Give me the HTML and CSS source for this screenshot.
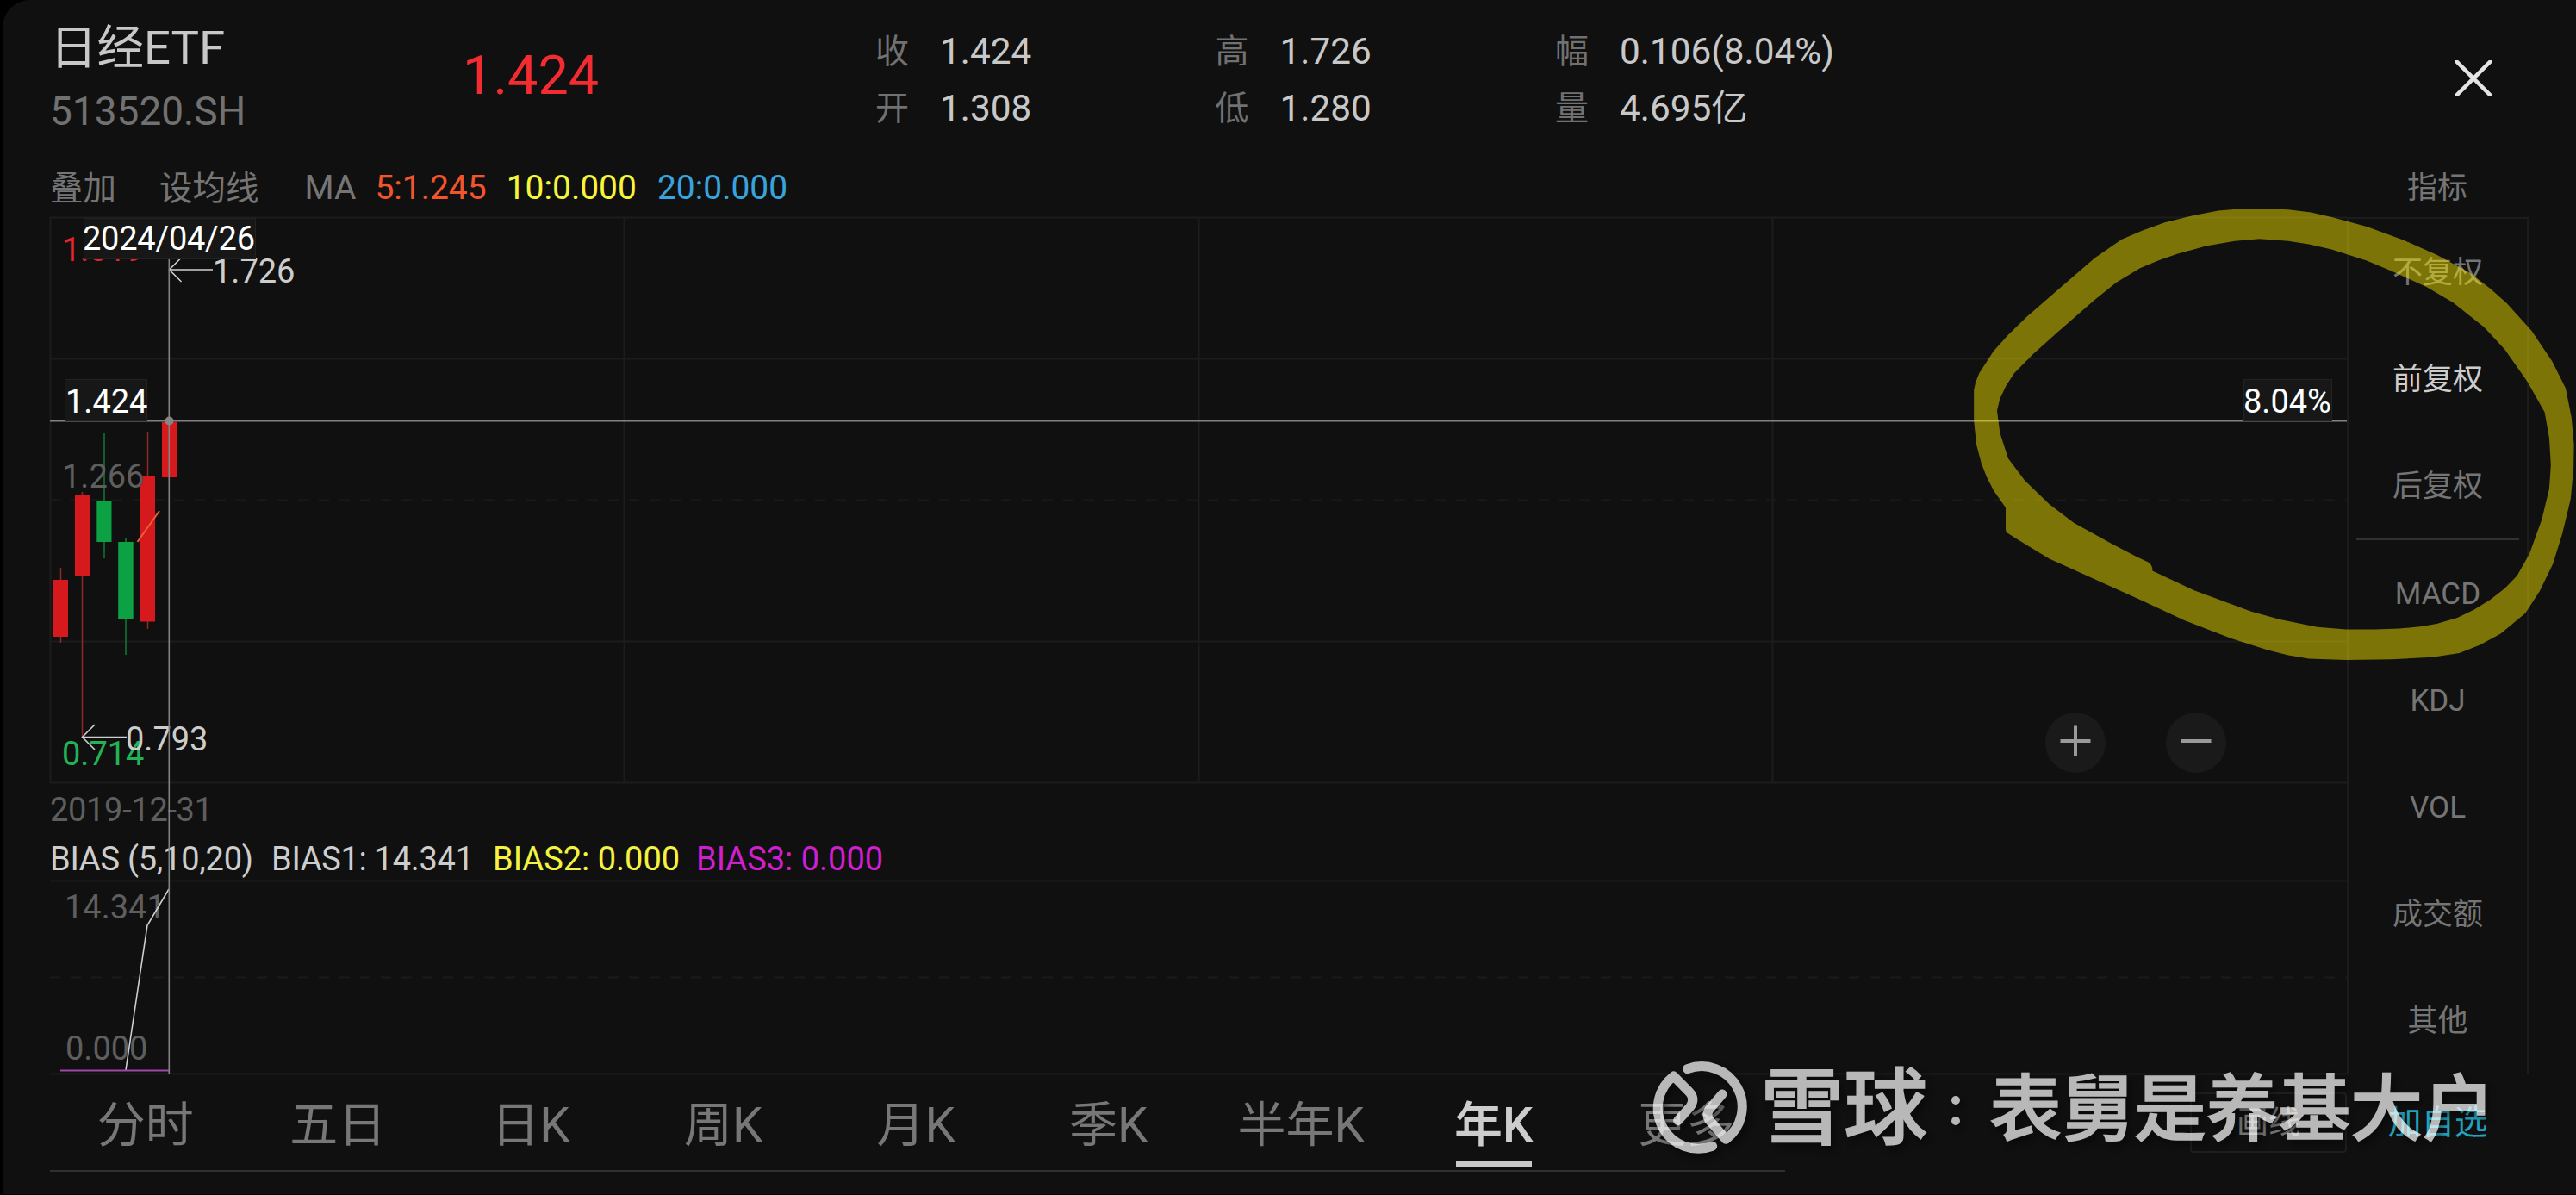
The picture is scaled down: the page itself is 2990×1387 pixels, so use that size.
FILE: index.html
```
<!DOCTYPE html>
<html lang="zh-Hans">
<head>
  <meta charset="UTF-8" />
  <meta name="viewport" content="width=device-width, initial-scale=1.0"/>
  <title>日经ETF 513520.SH</title>
  <link rel="stylesheet" href="styles.css">
</head>
<body>
<div class="app">

  <!-- 顶部行情 -->
  <header class="quote">
    <div class="quote-name">
      <div class="name">日经ETF</div>
      <div class="code">513520.SH</div>
    </div>
    <div class="price">1.424</div>
    <div class="stats">
      <div class="stat"><span class="label">收</span>1.424</div>
      <div class="stat"><span class="label">高</span>1.726</div>
      <div class="stat"><span class="label">幅</span>0.106(8.04%)</div>
      <div class="stat"><span class="label">开</span>1.308</div>
      <div class="stat"><span class="label">低</span>1.280</div>
      <div class="stat"><span class="label">量</span>4.695亿</div>
    </div>
    <svg class="close" viewBox="0 0 42 42"><path d="M0 0L42 42M42 0L0 42"/></svg>
  </header>

  <!-- 均线 -->
  <div class="toolbar">
    <span class="overlay-btn">叠加</span>
    <span class="ma-btn">设均线</span>
    <span class="ma-label">MA</span>
    <span class="ma5">5:1.245</span>
    <span class="ma10">10:0.000</span>
    <span class="ma20">20:0.000</span>
    <span class="side-title">指标</span>
  </div>

  <main class="main">
    <div class="chart">
      <svg class="chart-svg" viewBox="58 252 2666 995">
        <!-- 网格 -->
        <g class="grid">
          <path d="M58 252.5H2724M58 416.5H2724M58 744.5H2724M58 908.5H2724M58.5 252V908M724.5 252V908M1391.5 252V908M2057.5 252V908"/>
          <path d="M58 1022.5H2724M58 1246.5H2724"/>
          <path class="dash" d="M58 580.5H2724M58 1134.5H2724"/>
        </g>

        <!-- K线 -->
        <g class="up">
          <path d="M70.5 659V746M95.5 571V855M171.5 501V730"/>
          <rect x="62" y="673" width="17" height="66"/>
          <rect x="87" y="574.5" width="17" height="93.5"/>
          <rect x="163" y="552" width="17" height="169.5"/>
          <rect x="188" y="490" width="17" height="64"/>
        </g>
        <g class="down">
          <path d="M121 503V648M146 624V760"/>
          <rect x="112.3" y="581" width="17.2" height="48"/>
          <rect x="137.2" y="629" width="17.5" height="89"/>
        </g>
        <path class="ma-line" d="M159.5 629L185 593"/>

        <!-- 坐标 -->
        <text class="t-red" x="72" y="302.5">1.819</text>
        <text class="t-axis" x="72" y="566">1.266</text>
        <text class="t-green" x="72" y="888">0.714</text>
        <text class="t-axis" x="58" y="952.5" textLength="189">2019-12-31</text>
        <text class="t-axis" x="75" y="1066">14.341</text>
        <text class="t-axis" x="76" y="1230">0.000</text>

        <!-- 最高最低 -->
        <path class="arrow" d="M247 313H196.5M209.5 300L196.5 313L210.5 327M147 855.5H95.5M110 841L95.5 855.5L110 870"/>
        <text class="t-light" x="247" y="328">1.726</text>
        <text class="t-light" x="146" y="871">0.793</text>

        <!-- BIAS -->
        <text class="t-light" x="58" y="1010" textLength="236">BIAS (5,10,20)</text>
        <text class="t-light" x="315" y="1010" textLength="235">BIAS1: 14.341</text>
        <text class="t-yellow" x="572" y="1010">BIAS2: 0.000</text>
        <text class="t-purple" x="808" y="1010">BIAS3: 0.000</text>
        <path class="bias1" d="M146 1242L171 1074L196 1032"/>
        <path class="bias3" d="M70 1242.5H196"/>

        <!-- 十字光标 -->
        <path class="cross" d="M196.3 300V1247M58 488.7H2724"/>
        <circle class="cross-dot" cx="196.5" cy="488.5" r="5"/>
        <rect class="tip" x="97.5" y="253.5" width="199" height="47"/>
        <text class="t-white" x="96" y="290" textLength="200">2024/04/26</text>
        <rect class="tip" x="75.5" y="440.5" width="95" height="48"/>
        <text class="t-white" x="76" y="479">1.424</text>
        <rect class="tip" x="2604.5" y="440.5" width="102" height="48"/>
        <text class="t-white" x="2604" y="479">8.04%</text>
      </svg>

      <!-- 缩放按钮 -->
      <div class="zoom">
        <svg viewBox="0 0 70 70"><circle cx="35" cy="35" r="35"/><path d="M17.5 33H52.5M35 15.5V50.5"/></svg>
        <svg viewBox="0 0 70 70"><circle cx="35" cy="35" r="35"/><path d="M17.5 33H52.5"/></svg>
      </div>
    </div>

    <!-- 指标列表 -->
    <aside class="side">
      <div class="side-item">不复权</div>
      <div class="side-item active">前复权</div>
      <div class="side-item">后复权</div>
      <div class="divider"></div>
      <div class="side-item">MACD</div>
      <div class="side-item">KDJ</div>
      <div class="side-item">VOL</div>
      <div class="side-item">成交额</div>
      <div class="side-item">其他</div>
    </aside>
  </main>

  <!-- 周期 -->
  <footer class="bottom">
    <nav class="tabs">
      <a class="tab">分时</a>
      <a class="tab">五日</a>
      <a class="tab">日K</a>
      <a class="tab">周K</a>
      <a class="tab">月K</a>
      <a class="tab">季K</a>
      <a class="tab">半年K</a>
      <a class="tab active">年K</a>
      <a class="tab">更多</a>
    </nav>
    <a class="draw">画线</a>
    <a class="add">加自选</a>
  </footer>

  <!-- 手绘圈 -->
  <svg class="marker" viewBox="0 0 1568 1568" preserveAspectRatio="none">
    <path fill-rule="evenodd" d="M800 157L870 160L925 168L975 182L1060 210L1150 250L1230 293L1310 345L1360 392L1400 435L1460 515L1510 605L1543 685L1557 770L1563 850L1562 920L1555 1010L1535 1110L1512 1200L1480 1280L1445 1345L1385 1405L1335 1438L1285 1462L1220 1474L1120 1480L1010 1482L920 1478L870 1468L820 1453L730 1418L620 1367L510 1305L400 1245L290 1185L215 1130L188 1109Q184 1105 184 1098V1035L155 985L138 945L125 905L113 850L107 780V690L111 667L120 640L155 575L190 528L235 475L340 365L400 302L465 248L515 222L570 198L640 177L700 163L750 158Z
      M800 246L870 252L920 262L975 277L1060 310L1120 340L1205 387L1270 433L1345 505L1395 570L1450 665L1492 755L1503 830L1507 910L1503 980L1485 1070L1455 1170L1425 1235L1395 1272L1360 1305L1320 1335L1280 1358L1230 1376L1190 1384L1140 1390L1080 1392H1010L940 1385L850 1363L780 1340L640 1277L540 1220Q541 1204 530 1195L500 1178L440 1140L350 1080L290 1025L230 955L190 890L170 815L163 750L170 715L185 677L205 640L250 585L310 520L400 425L452 374L510 332L555 309L600 290L670 267L740 252Z"/>
  </svg>

  <!-- 水印 -->
  <div class="watermark">
    <svg class="wm-logo" viewBox="50 30 340 340">
      <path d="M175 62A141 141 0 0 1 309 307L250 239Q240 223 250 204L296 150"/>
      <path d="M262 331A141 141 0 0 1 127 87L182 143Q203 166 185 193L142 242"/>
    </svg>
    <span class="wm-brand">雪球</span>
    <span class="wm-colon"><i></i><i></i></span>
    <span class="wm-user">表舅是养基大户</span>
  </div>

</div>
</body>
</html>
```
FILE: styles.css
```
* {
  box-sizing: border-box;
}

body {
  margin: 0;
  background-color: #000;
  font-family: Roboto, "Noto Sans CJK SC", sans-serif;
  color: #c8c8c8;
  overflow: hidden;
}

.app {
  position: relative;
  height: 1386px;
  margin-left: 3px;
  padding-left: 55px;
  background-color: #101010;
  border-top-left-radius: 32px;
  display: flex;
  flex-direction: column;
}

.quote {
  height: 189px;
  display: grid;
  grid-template-columns: 479px 479px 1184px 1fr;
}

.quote-name {
  padding-top: 20px;
}

.name {
  font-size: 54.5px;
  line-height: 70px;
}

.code {
  margin-top: 4px;
  font-size: 46px;
  line-height: 70px;
  color: #717171;
}

.price {
  padding-top: 48px;
  font-size: 63px;
  line-height: 80px;
  color: #f22c30;
}

.stats {
  padding-top: 26.5px;
  display: grid;
  grid-template-columns: repeat(3, 394.5px);
  grid-auto-rows: 66px;
  font-size: 42.3px;
  line-height: 66px;
}

.stat {
  display: flex;
}

.label {
  width: 75px;
  font-size: 39px;
  color: #717171;
}

.close {
  width: 42px;
  height: 42px;
  margin-top: 70px;
  margin-left: auto;
  margin-right: 98px;
}

.close path {
  stroke: #e4e4e4;
  stroke-width: 4.5;
}

.toolbar {
  height: 63px;
  padding-bottom: 4px;
  display: flex;
  align-items: center;
  font-size: 39px;
  line-height: 59px;
  color: #757575;
}

.overlay-btn,
.ma-btn {
  font-size: 38.5px;
  margin-right: 50px;
}

.ma-btn {
  margin-right: 53px;
}

.ma-label {
  margin-right: 22px;
}

.ma5 {
  color: #f2542c;
  margin-right: 23px;
}

.ma10 {
  color: #f5f53c;
  margin-right: 24px;
}

.ma20 {
  color: #38a3dc;
}

.side-title {
  width: 210px;
  margin-left: auto;
  margin-right: 56px;
  font-size: 35px;
  text-align: center;
}

.main {
  height: 995px;
  display: flex;
}

.chart {
  position: relative;
  width: 2666px;
}

.chart-svg {
  display: block;
  width: 2666px;
  height: 995px;
  overflow: visible;
  font-size: 38px;
}

.grid path {
  stroke: #1c1c1c;
  stroke-width: 2;
  fill: none;
}

.grid .dash {
  stroke: #1a1a1a;
  stroke-dasharray: 12 12;
}

.up path {
  stroke: #8e2a22;
  stroke-width: 1.5px;
}

.up rect {
  fill: #d5191c;
}

.down path {
  stroke: #137a38;
  stroke-width: 1.5px;
}

.down rect {
  fill: #0ca244;
}

.ma-line {
  stroke: #ea6038;
  stroke-width: 2;
}

.arrow,
.bias1 {
  fill: none;
  stroke: #cfcfcf;
  stroke-width: 1.6px;
}

.bias3 {
  stroke: #a245a8;
  stroke-width: 2;
}

.cross {
  stroke: #828282;
  stroke-width: 1.6px;
}

.cross-dot {
  fill: #858585;
}

.tip {
  fill: #171717;
  stroke: #222;
}

.t-red { fill: #e3262b; }
.t-green { fill: #25b256; }
.t-axis { fill: #5e5e5e; }
.t-light { fill: #cdcdcd; }
.t-white { fill: #fff; }
.t-yellow { fill: #f3f340; }
.t-purple { fill: #cf1fd0; }

.zoom {
  position: absolute;
  left: 2316px;
  top: 575px;
  display: flex;
  gap: 70px;
}

.zoom svg {
  width: 70px;
  height: 70px;
}

.zoom circle {
  fill: #1a1a1a;
}

.zoom path {
  stroke: #9a9a9a;
  stroke-width: 4;
}

.side {
  width: 211px;
  border: 2px solid #1c1c1c;
  border-bottom-width: 1px;
  font-size: 35px;
  color: #757575;
}

.side-item {
  height: 124px;
  line-height: 125px;
  text-align: center;
}

.side-item.active {
  color: #cdcdcd;
}

.divider {
  height: 3px;
  margin: -2px 9px 0;
  background-color: #323232;
}

.bottom {
  height: 113px;
  display: flex;
  align-items: flex-start;
}

.tabs {
  width: 2014px;
  height: 113px;
  padding-right: 2px;
  display: flex;
  border-bottom: 2px solid #303030;
}

.tab {
  width: 224px;
  height: 108px;
  margin-left: -1px;
  margin-right: 1px;
  display: flex;
  flex-direction: column;
  align-items: center;
  font-size: 56px;
  line-height: 118px;
  color: #777;
}

.tab.active {
  color: #cdcdcd;
  font-weight: 500;
}

.tab.active::after {
  content: "";
  width: 88px;
  height: 8px;
  margin-top: -18px;
  flex-shrink: 0;
  background-color: #c8c8c8;
}

.draw {
  width: 182px;
  height: 70px;
  margin: 21px 0 0 470px;
  border: 2px solid #1f1f1f;
  border-radius: 4px;
  font-size: 37px;
  line-height: 68px;
  text-align: center;
  color: #757575;
}

.add {
  margin: 21px 0 0 48px;
  font-size: 38.5px;
  line-height: 70px;
  color: #22a4be;
}

/* 荧光笔 */
.marker {
  position: absolute;
  left: 2237px;
  top: 180px;
  width: 750px;
  height: 620px;
}

.marker path {
  fill: rgba(255, 235, 0, 0.46);
}

.watermark {
  position: absolute;
  left: 1914px;
  top: 1230px;
  height: 114px;
  display: flex;
  align-items: center;
  color: #fff;
  opacity: 0.7;
  filter: drop-shadow(4px 5px 4px rgba(0, 0, 0, 0.6));
}

.wm-logo {
  width: 113.3px;
  height: 113.3px;
}

.wm-logo path {
  fill: none;
  stroke: #fff;
  stroke-width: 33;
  stroke-linecap: round;
  stroke-linejoin: round;
}

.wm-brand {
  margin-left: 13px;
  font-size: 97px;
  font-weight: 500;
  line-height: 114px;
}

.wm-colon {
  margin: 4px 34px 0 28px;
  display: flex;
  flex-direction: column;
  gap: 14px;
}

.wm-colon i {
  width: 10px;
  height: 10px;
  border-radius: 50%;
  background-color: #fff;
}

.wm-user {
  margin-top: 2px;
  font-size: 83.8px;
  font-weight: 500;
  line-height: 114px;
}

.wm-brand,
.wm-user {
  -webkit-text-stroke: 1.5px #fff;
}
```
